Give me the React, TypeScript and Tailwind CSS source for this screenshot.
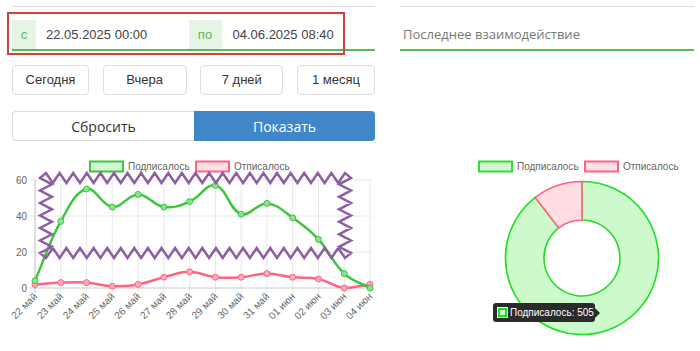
import React from "react";

const labels = ["22 май", "23 май", "24 май", "25 май", "26 май", "27 май", "28 май", "29 май", "30 май", "31 май", "01 июн", "02 июн", "03 июн", "04 июн"];
const subs = [4, 37, 55, 45, 52, 45, 48, 57, 41, 47, 39, 27, 8, 0];
const unsubs = [2, 3, 3, 1, 2, 6, 9, 6, 6, 8, 6, 5, 0, 2];

const GREEN = "#3cc63c";
const PINK = "#ff6384";
const PURPLE = "#8e5ea2";

const xAt = (i: number) => 35 + i * 25.77;
const yAt = (v: number) => 288 - v * 1.8;

// chart.js style spline, tension 0.4
function spline(vals: number[]) {
  const pts = vals.map((v, i) => [xAt(i), yAt(v)]);
  const t = 0.4;
  const cps = pts.map((p, i) => {
    const p0 = pts[i - 1] || p;
    const p2 = pts[i + 1] || p;
    const d01 = Math.hypot(p[0] - p0[0], p[1] - p0[1]);
    const d12 = Math.hypot(p2[0] - p[0], p2[1] - p[1]);
    const sum = d01 + d12 || 1;
    const fa = (t * d01) / sum;
    const fb = (t * d12) / sum;
    return {
      prev: [p[0] - fa * (p2[0] - p0[0]), Math.min(288, p[1] - fa * (p2[1] - p0[1]))],
      next: [p[0] + fb * (p2[0] - p0[0]), Math.min(288, p[1] + fb * (p2[1] - p0[1]))],
    };
  });
  let d = `M${pts[0][0]},${pts[0][1]}`;
  for (let i = 1; i < pts.length; i++) {
    const a = cps[i - 1].next;
    const b = cps[i].prev;
    d += ` C${a[0]},${a[1]} ${b[0]},${b[1]} ${pts[i][0]},${pts[i][1]}`;
  }
  return { d, pts };
}

function zig(x1: number, y1: number, x2: number, y2: number, n: number, amp: number) {
  const dx = x2 - x1;
  const dy = y2 - y1;
  const len = Math.hypot(dx, dy);
  const nx = -dy / len;
  const ny = dx / len;
  const out: string[] = [];
  for (let k = 0; k <= n * 2; k++) {
    const f = k / (n * 2);
    const s = k % 2 === 0 ? -amp : amp;
    out.push(`${(x1 + dx * f + nx * s).toFixed(1)},${(y1 + dy * f + ny * s).toFixed(1)}`);
  }
  return out;
}

function arc(cx: number, cy: number, r0: number, r1: number, a0: number, a1: number) {
  const p = (r: number, a: number) => [cx + r * Math.cos(a), cy + r * Math.sin(a)];
  const large = a1 - a0 > Math.PI ? 1 : 0;
  const o0 = p(r1, a0), o1 = p(r1, a1), i1 = p(r0, a1), i0 = p(r0, a0);
  return `M${o0[0]},${o0[1]} A${r1},${r1} 0 ${large} 1 ${o1[0]},${o1[1]} L${i1[0]},${i1[1]} A${r0},${r0} 0 ${large} 0 ${i0[0]},${i0[1]} Z`;
}

const LegendItem = ({ x, color, fill, text }: { x: number; color: string; fill: string; text: string }) => (
  <g>
    <rect x={x} y={161.5} width={33} height={10} fill={fill} stroke={color} strokeWidth={2} />
    <text x={x + 38} y={170} fontSize={10} fill="#666">{text}</text>
  </g>
);

function LineChart() {
  const g = spline(subs);
  const r = spline(unsubs);
  const zz = [
    ...zig(46, 178, 345, 178, 22, 5),
    ...zig(345, 178, 345, 253, 6, 6),
    ...zig(345, 253, 46, 253, 22, 5),
    ...zig(46, 253, 46, 178, 6, 6),
  ];
  return (
    <svg width={363} height={201} viewBox="12 150 363 201" overflow="visible" className="block" style={{ fontFamily: '"Liberation Sans", Arial, sans-serif' }}>
      <LegendItem x={90} color={GREEN} fill="#d3f5d3" text="Подписалось" />
      <LegendItem x={196} color={PINK} fill="#ffe0e6" text="Отписалось" />
      {labels.map((_, i) => (
        <line key={i} x1={xAt(i)} x2={xAt(i)} y1={180} y2={293} stroke="#e8e8e8" />
      ))}
      {[60, 40, 20].map((v) => (
        <line key={v} x1={30} x2={372} y1={yAt(v)} y2={yAt(v)} stroke="#e8e8e8" />
      ))}
      <line x1={35} x2={35} y1={180} y2={293} stroke="#c8c8c8" />
      <line x1={30} x2={372} y1={288} y2={288} stroke="#c8c8c8" />
      {[60, 40, 20, 0].map((v) => (
        <text key={v} x={27} y={yAt(v) + 3.5} fontSize={10} fill="#666" textAnchor="end">{v}</text>
      ))}
      {labels.map((l, i) => (
        <text key={l} x={0} y={0} fontSize={10} fill="#666" textAnchor="end" transform={`translate(${xAt(i) + 3},${297}) rotate(-45)`}>{l}</text>
      ))}
      <path d={r.d} fill="none" stroke={PINK} strokeWidth={2.5} />
      {r.pts.map((p, i) => (
        <circle key={i} cx={p[0]} cy={p[1]} r={3} fill="#ffa9ba" stroke={PINK} strokeWidth={1} />
      ))}
      <path d={g.d} fill="none" stroke={GREEN} strokeWidth={2.5} />
      {g.pts.map((p, i) => (
        <circle key={i} cx={p[0]} cy={p[1]} r={3} fill="#8fe08f" stroke={GREEN} strokeWidth={1} />
      ))}
      <polygon points={zz.join(" ")} fill="none" stroke={PURPLE} strokeWidth={2.5} strokeLinejoin="miter" />
    </svg>
  );
}

function Donut() {
  const total = 505 + 59;
  const start = -Math.PI / 2;
  const mid = start + (505 / total) * Math.PI * 2;
  const end = start + Math.PI * 2;
  return (
    <svg width={294} height={201} viewBox="400 150 294 201" className="block" style={{ fontFamily: '"Liberation Sans", Arial, sans-serif' }}>
      <LegendItem x={479} color="#33dd33" fill="#d3f7d3" text="Подписалось" />
      <LegendItem x={585} color={PINK} fill="#ffe0e6" text="Отписалось" />
      <path d={arc(582, 258, 38, 76.5, start, mid)} fill="#cdfacd" stroke="#22dd22" strokeWidth={1.6} />
      <path d={arc(582, 258, 38, 76.5, mid, end - 0.0001)} fill="#ffdde3" stroke={PINK} strokeWidth={1.6} />
    </svg>
  );
}

export default function App() {
  return (
    <div className="relative w-[700px] h-[351px] overflow-hidden bg-white flex" style={{ fontFamily: '"Liberation Sans", Arial, sans-serif' }}>
      <div className="ml-3 w-[363px] flex flex-col shrink-0">
        <div className="mt-[6px] border-t border-[#dddddd]" />
        <div className="mt-[13px] h-[31px] flex border-b-2 border-[#5cb85c] text-[13px]">
          <div className="w-[24px] bg-[#e6f4e6] text-[#5cb85c] flex items-center justify-center pt-[1px]">с</div>
          <div className="flex-1 flex items-center pl-[10px] text-[#444]">22.05.2025 00:00</div>
          <div className="w-[33px] bg-[#e6f4e6] text-[#5cb85c] flex items-center justify-center pt-[1px]">по</div>
          <div className="flex-1 flex items-center pl-[11px] text-[#444]">04.06.2025 08:40</div>
        </div>
        <div className="mt-[14px] h-[30px] flex justify-between text-[13px] text-[#333]">
          <button className="w-[77px] border border-[#dcdcdc] rounded-[4px] bg-white">Сегодня</button>
          <button className="w-[84px] border border-[#dcdcdc] rounded-[4px] bg-white">Вчера</button>
          <button className="w-[83px] border border-[#dcdcdc] rounded-[4px] bg-white">7 дней</button>
          <button className="w-[78px] border border-[#dcdcdc] rounded-[4px] bg-white">1 месяц</button>
        </div>
        <div className="mt-[16px] h-[30px] flex text-[14px]" style={{ fontFamily: '"Open Sans", sans-serif' }}>
          <button className="flex-1 border border-r-0 border-[#dcdcdc] rounded-l-[4px] bg-white text-[#333]">Сбросить</button>
          <button className="flex-1 rounded-r-[4px] bg-[#3f87c9] text-white">Показать</button>
        </div>
        <div className="mt-[9px]">
          <LineChart />
        </div>
      </div>
      <div className="ml-[25px] w-[294px] flex flex-col shrink-0">
        <div className="mt-[6px] border-t border-[#dddddd]" />
        <div
          className="mt-[13px] h-[31px] flex items-center pl-[3px] border-b-2 border-[#5cb85c] text-[13px] text-[#777]"
          style={{ fontFamily: '"Open Sans", sans-serif' }}
        >
          Последнее взаимодействие
        </div>
        <div className="mt-[99px]">
          <Donut />
        </div>
      </div>

      <div className="absolute left-[7px] top-[12px] w-[338px] h-[43px] border-2 border-[#d6403a]" />

      <div className="absolute left-[493px] top-[303px] h-[19px] w-[102px] rounded-[3px] bg-[#2b2b2b] flex items-center pl-[4px] gap-[2px] text-[10px] leading-none text-white whitespace-nowrap">
        <span className="shrink-0 w-[11px] h-[11px] bg-white p-[1px]">
          <span className="block w-full h-full bg-[#cdfacd] border-2 border-[#22dd22]" />
        </span>
        <span>Подписалось: 505</span>
        <span className="absolute right-[-5px] top-[5px] w-0 h-0 border-y-[5px] border-y-transparent border-l-[5px] border-l-[#2b2b2b]" />
      </div>
    </div>
  );
}
